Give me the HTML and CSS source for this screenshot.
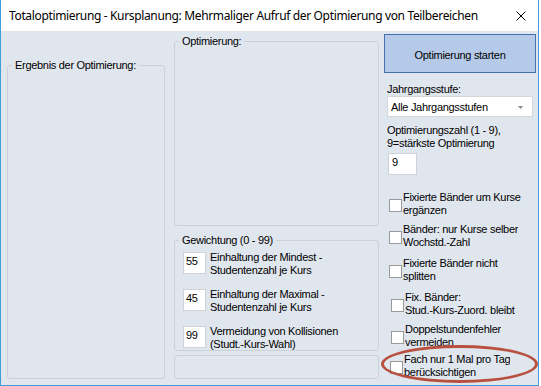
FILE: index.html
```html
<!DOCTYPE html>
<html lang="de">
<head>
<meta charset="utf-8">
<title>Totaloptimierung</title>
<link rel="stylesheet" href="styles.css">
</head>
<body>
<div class="window">
  <div class="titlebar">
    <span class="title">Totaloptimierung - Kursplanung: Mehrmaliger Aufruf der Optimierung von Teilbereichen</span>
    <svg class="close" viewBox="0 0 10 10" width="10" height="10"><path d="M0.5 0.5 L9.5 9.5 M9.5 0.5 L0.5 9.5" stroke="#000" stroke-width="1" fill="none"/></svg>
  </div>
  <div class="client">
    <div class="col-left">
      <fieldset class="group group-result"><legend>Ergebnis der Optimierung:</legend></fieldset>
    </div>
    <div class="col-mid">
      <fieldset class="group group-opt"><legend>Optimierung:</legend></fieldset>
      <fieldset class="group group-weight"><legend>Gewichtung (0 - 99)</legend>
        <div class="weight-row"><div class="num">55</div><div class="wlabel">Einhaltung der Mindest -<br>Studentenzahl je Kurs</div></div>
        <div class="weight-row"><div class="num">45</div><div class="wlabel">Einhaltung der Maximal -<br>Studentenzahl je Kurs</div></div>
        <div class="weight-row"><div class="num">99</div><div class="wlabel">Vermeidung von Kollisionen<br>(Studt.-Kurs-Wahl)</div></div>
      </fieldset>
      <fieldset class="group group-empty"></fieldset>
    </div>
    <div class="col-right">
      <div class="start-btn">Optimierung starten</div>
      <div class="field-label">Jahrgangsstufe:</div>
      <div class="combo"><span>Alle Jahrgangsstufen</span><svg class="combo-arrow" viewBox="0 0 5 3" width="5" height="3"><path d="M0 0 H5 L2.5 3 Z" fill="#8a8a8a"/></svg></div>
      <div class="field-label two-line">Optimierungszahl (1 - 9),<br>9=stärkste Optimierung</div>
      <div class="num num-level">9</div>
      <div class="check c1"><span class="box"></span><span class="ctext">Fixierte Bänder um Kurse<br>ergänzen</span></div>
      <div class="check c2"><span class="box"></span><span class="ctext">Bänder: nur Kurse selber<br>Wochstd.-Zahl</span></div>
      <div class="check c3"><span class="box"></span><span class="ctext">Fixierte Bänder nicht<br>splitten</span></div>
      <div class="check c4"><span class="box"></span><span class="ctext">Fix. Bänder:<br>Stud.-Kurs-Zuord. bleibt</span></div>
      <div class="check c5"><span class="box"></span><span class="ctext">Doppelstundenfehler<br>vermeiden</span></div>
      <div class="check c6"><span class="box"></span><span class="ctext">Fach nur 1 Mal pro Tag<br>berücksichtigen</span></div>
    </div>
  </div>
  <div class="highlight"></div>
</div>
</body>
</html>
```
FILE: styles.css
```css
* { box-sizing: border-box; }
html, body { margin: 0; padding: 0; background: #ffffff; }
body {
  font-family: "Liberation Sans", Arial, sans-serif;
  font-size: 11px;
  line-height: 13px;
  letter-spacing: -0.3px;
  color: #000;
}
.window {
  position: relative;
  width: 539px;
  height: 386px;
  border-left: 1px solid #3f9ddb;
  border-right: 1px solid #3f9ddb;
  border-bottom: 1px solid #3f9ddb;
  display: flex;
  flex-direction: column;
}
.titlebar {
  height: 31px;
  flex: none;
  background: #fff;
  display: flex;
  align-items: center;
  padding-left: 8px;
  font-family: "Noto Sans", "Open Sans", sans-serif;
  font-size: 12px;
  letter-spacing: -0.35px;
}
.title { flex: 1; white-space: nowrap; }
.close { flex: none; margin-right: 12px; margin-top: 1px; }
.client {
  flex: 1;
  background: #e0e6ee;
  display: flex;
  padding-left: 6px;
}
.group {
  margin: 0;
  padding: 0 4px;
  border: 1px solid #cdd1d6;
  border-radius: 3px;
  min-width: 0;
}
.group legend { padding: 0 3px; line-height: 13px; }
.col-left {
  width: 158px;
  display: flex;
  flex-direction: column;
  padding: 28px 0 6px;
}
.group-result { flex: 1; }
.col-mid {
  width: 205px;
  margin-left: 9px;
  display: flex;
  flex-direction: column;
  padding-top: 4px;
}
.group-opt { height: 191px; flex: none; }
.group-weight { height: 117px; flex: none; margin-top: 8px; padding-top: 5px; }
.group-empty { height: 24px; flex: none; margin-top: 4px; }
.weight-row { display: flex; margin-left: 4px; margin-bottom: 12px; }
.num {
  width: 23px;
  height: 22px;
  background: #fff;
  border: 1px solid #cfd2d6;
  padding: 2px 2px;
  flex: none;
}
.wlabel { margin-left: 4px; margin-top: -1px; white-space: nowrap; }
.col-right {
  width: 154px;
  margin-left: 5px;
  display: flex;
  flex-direction: column;
  align-items: flex-start;
}
.start-btn {
  margin-top: 3px;
  width: 152px;
  height: 39px;
  background: #b5cae9;
  border: 1px solid #4470b0;
  display: flex;
  align-items: center;
  justify-content: center;
  padding-top: 3px;
}
.field-label { margin-top: 10px; margin-left: 3px; white-space: nowrap; }
.field-label.two-line { margin-top: 7px; }
.combo {
  width: 146px;
  height: 21px;
  margin-left: 3px;
  background: #fff;
  border: 1px solid #d3d6da;
  display: flex;
  align-items: center;
  justify-content: space-between;
  padding: 1px 9px 0 3px;
}
.num-level { width: 29px; margin-left: 4px; margin-top: 3px; padding-left: 3px; }
.check { display: flex; align-items: flex-start; height: 26px; overflow: hidden; }
.check .box {
  width: 13px;
  height: 13px;
  flex: none;
  margin-top: 8px;
  background: #fff;
  border: 1px solid #9a9a9a;
}
.check .ctext { margin-left: 1px; white-space: nowrap; }
.c1 { margin-top: 16px; margin-left: 5px; }
.c2 { margin-top: 6px; margin-left: 5px; }
.c3 { margin-top: 8px; margin-left: 5px; }
.c4 { margin-top: 8px; margin-left: 7px; }
.c5 { margin-top: 6px; margin-left: 7px; height: 23px; }
.c6 { margin-top: 7px; margin-left: 6px; }
.highlight {
  position: absolute;
  left: 380px;
  top: 345px;
  width: 157px;
  height: 38px;
  border: 3px solid #b9503f;
  border-radius: 50%;
}
```
